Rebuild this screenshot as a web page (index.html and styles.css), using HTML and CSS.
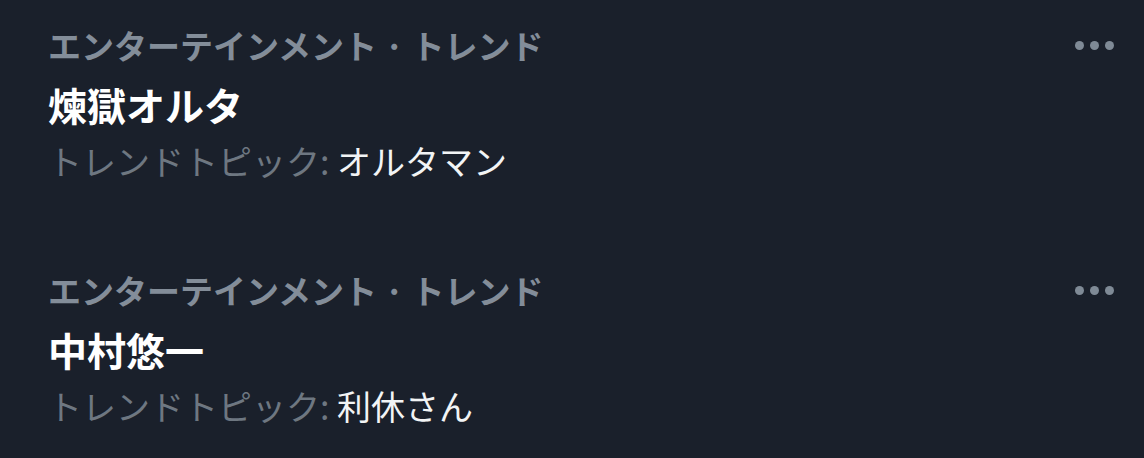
FILE: index.html
```html
<!DOCTYPE html>
<html lang="ja">
<head>
<meta charset="utf-8">
<link rel="stylesheet" href="styles.css">
</head>
<body>
<div class="list">
  <div class="trend">
    <div class="meta">
      <span class="cat">エンターテインメント · トレンド</span>
      <span class="more"><i></i><i></i><i></i></span>
    </div>
    <div class="title">煉獄オルタ</div>
    <div class="topic">トレンドトピック: <span class="name">オルタマン</span></div>
  </div>
  <div class="trend">
    <div class="meta">
      <span class="cat">エンターテインメント · トレンド</span>
      <span class="more"><i></i><i></i><i></i></span>
    </div>
    <div class="title">中村悠一</div>
    <div class="topic">トレンドトピック: <span class="name">利休さん</span></div>
  </div>
</div>
</body>
</html>
```
FILE: styles.css
```css
html, body {
  margin: 0;
  padding: 0;
  background: #1a202b;
  width: 1144px;
  height: 458px;
  overflow: hidden;
}
body {
  font-family: "Noto Sans CJK JP", "Noto Sans", sans-serif;
}
.trend {
  padding: 23px 30px 62px 48px;
}
.trend:last-child {
  padding-bottom: 0;
}
.meta {
  display: flex;
  justify-content: space-between;
  align-items: center;
  height: 44px;
}
.cat {
  font-size: 33px;
  line-height: 44px;
  font-weight: 700;
  color: #838d99;
  white-space: nowrap;
}
.more {
  display: flex;
  gap: 6px;
  align-items: center;
}
.more i {
  display: block;
  width: 9px;
  height: 9px;
  border-radius: 50%;
  background: #7f8a96;
}
.title {
  margin-top: 7px;
  font-size: 39px;
  line-height: 60px;
  font-weight: 700;
  color: #ffffff;
}
.topic {
  margin-top: 5px;
  font-size: 34px;
  line-height: 44px;
  color: #6e7781;
}
.topic .name {
  color: #f2f4f5;
}
```
